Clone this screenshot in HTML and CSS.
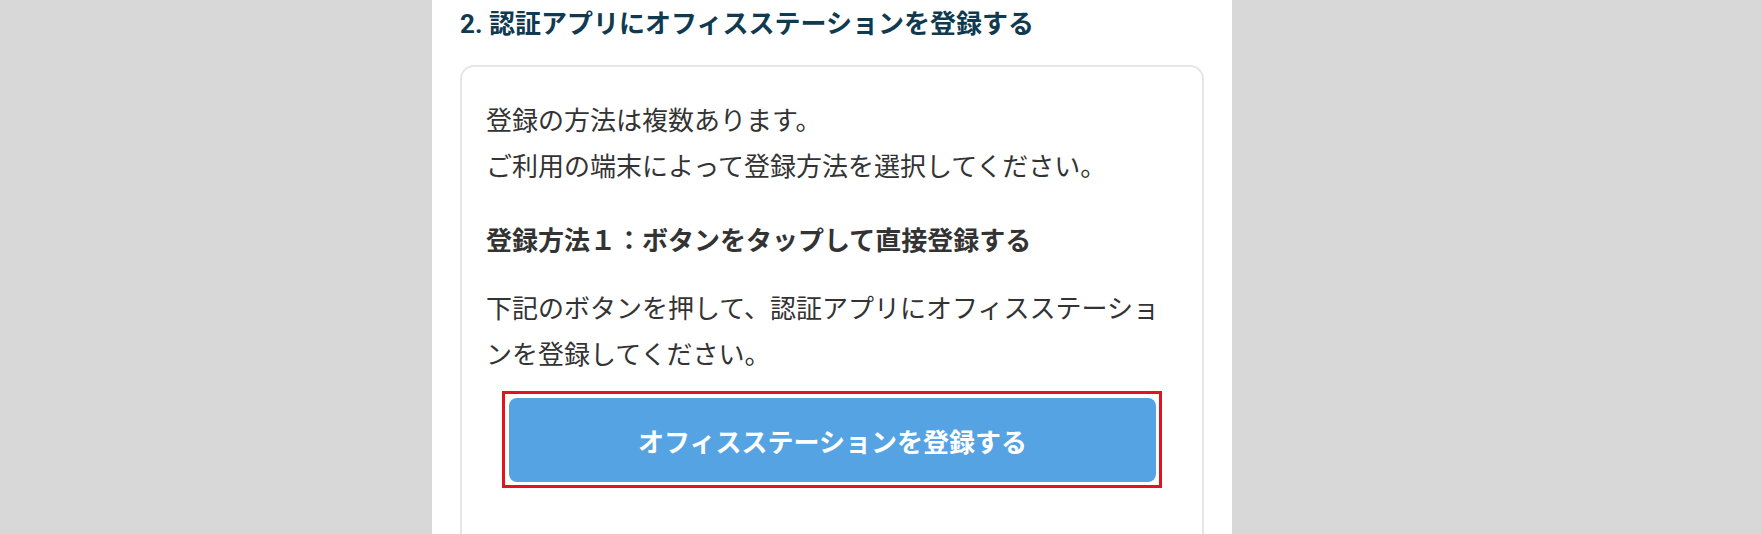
FILE: index.html
```html
<!DOCTYPE html>
<html lang="ja">
<head>
<meta charset="utf-8">
<title>認証アプリにオフィスステーションを登録する</title>
<link rel="stylesheet" href="styles.css">
</head>
<body>
<main class="panel">
  <h2 class="step-title">2. 認証アプリにオフィスステーションを登録する</h2>
  <section class="card">
    <p class="text intro">登録の方法は複数あります。<br>ご利用の端末によって登録方法を選択してください。</p>
    <h3 class="method-title">登録方法１：ボタンをタップして直接登録する</h3>
    <p class="text desc">下記のボタンを押して、認証アプリにオフィスステーションを登録してください。</p>
    <div class="highlight">
      <a class="register-btn" href="#">オフィスステーションを登録する</a>
    </div>
  </section>
</main>
</body>
</html>
```
FILE: styles.css
```css
html, body {
  margin: 0;
  padding: 0;
  height: 100%;
  background: #d8d8d8;
}

body {
  font-family: Roboto, "Noto Sans CJK JP", "Noto Sans", sans-serif;
  overflow: hidden;
}

.panel {
  width: 800px;
  margin: 0 0 0 432px;
  height: 100%;
  background: #ffffff;
  padding: 4px 28px 0;
  box-sizing: border-box;
  display: flex;
  flex-direction: column;
}

.step-title {
  margin: 0 0 21px;
  font-size: 26px;
  line-height: 40px;
  font-weight: 700;
  color: #0f3a50;
}

.card {
  flex: 1;
  border: 2px solid #e6e6e6;
  border-bottom: none;
  border-radius: 14px 14px 0 0;
  padding: 29px 24px 0;
  box-sizing: border-box;
  overflow: hidden;
}

.text {
  margin: 0;
  font-size: 26px;
  line-height: 46px;
  color: #333333;
  font-family: "Noto Sans CJK JP", sans-serif;
}

.method-title {
  margin: 28px 0 22px;
  font-size: 26px;
  line-height: 46px;
  font-weight: 700;
  color: #333333;
  font-family: "Noto Sans CJK JP", sans-serif;
}

.highlight {
  margin: 15px 16px 0;
  border: 3px solid #e3131f;
  padding: 4px 3px 3px 4px;
}

.register-btn {
  display: flex;
  align-items: center;
  justify-content: center;
  height: 84px;
  background: #56a3e4;
  border-radius: 8px;
  color: #ffffff;
  font-weight: 700;
  font-size: 26px;
  text-decoration: none;
  font-family: "Noto Sans CJK JP", sans-serif;
}
```
